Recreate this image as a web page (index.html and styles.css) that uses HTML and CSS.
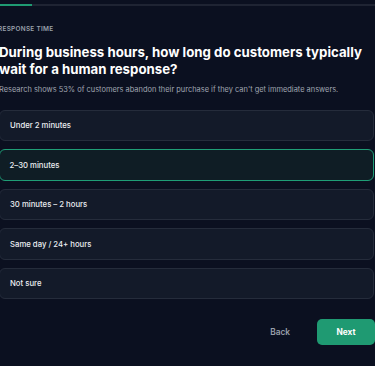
FILE: index.html
```html
<!DOCTYPE html>
<html lang="en">
<head>
<meta charset="utf-8">
<title>Response time</title>
<link rel="stylesheet" href="styles.css">
</head>
<body>
<div class="page">
  <div class="progress"><div class="progress-fill" style="width:32px"></div></div>
  <div class="content">
    <p class="eyebrow">RESPONSE TIME</p>
    <h1 class="title">During business hours, how long do customers typically wait for a human response?</h1>
    <p class="sub">Research shows 53% of customers abandon their purchase if they can't get immediate answers.</p>
    <div class="options">
      <button class="option">Under 2 minutes</button>
      <button class="option selected">2–30 minutes</button>
      <button class="option">30 minutes – 2 hours</button>
      <button class="option">Same day / 24+ hours</button>
      <button class="option">Not sure</button>
    </div>
    <div class="actions">
      <button class="back">Back</button>
      <button class="next">Next</button>
    </div>
  </div>
</div>
</body>
</html>
```
FILE: styles.css
```css
html, body {
  margin: 0;
  padding: 0;
  background: #0b1020;
  overflow: hidden;
}
body {
  font-family: Inter, "Noto Sans", sans-serif;
  color: #f3f4f6;
}
.page {
  width: 375px;
  height: 366px;
  padding-top: 4px;
  box-sizing: border-box;
}
.progress {
  height: 2px;
  background: #1f2433;
}
.progress-fill {
  height: 100%;
  background: #1f9a72;
}
.content {
  margin-left: -2px;
  width: 376px;
}
.eyebrow {
  margin: 17.5px 0 0;
  font-size: 6.4px;
  line-height: 10px;
  letter-spacing: 0.3px;
  font-weight: 600;
  color: #9aa0ab;
}
.title {
  margin: 10.1px 0 0 1px;
  font-size: 13.25px;
  line-height: 17px;
  font-weight: 700;
  color: #ffffff;
}
.sub {
  margin: 6.4px 0 0 1px;
  font-size: 7.45px;
  line-height: 12px;
  color: #a0a6b1;
}
.options {
  margin-top: 13.9px;
  display: flex;
  flex-direction: column;
  gap: 8px;
  margin-left: 1px;
  width: 375px;
}
.option {
  height: 31.5px;
  box-sizing: border-box;
  border: 1px solid #252c3b;
  border-radius: 6px;
  background: #131a29;
  color: #eceef2;
  font-family: inherit;
  font-size: 7.74px;
  font-weight: 500;
  text-align: left;
  padding: 0 10px;
}
.option.selected {
  border: 1.5px solid #1f9d76;
  background: #0f1d25;
  padding-left: 9.5px;
}
.actions {
  margin-top: 19.5px;
  display: flex;
  justify-content: flex-end;
  align-items: center;
  gap: 27px;
  width: 377px;
}
.back {
  background: none;
  border: none;
  color: #9aa0ab;
  font-family: inherit;
  font-weight: 600;
  font-size: 8.3px;
  padding: 0;
}
.next {
  width: 58px;
  height: 26px;
  border: none;
  border-radius: 5px;
  background: #1f9a72;
  color: #ffffff;
  font-family: inherit;
  font-weight: 700;
  font-size: 8.3px;
}
```
